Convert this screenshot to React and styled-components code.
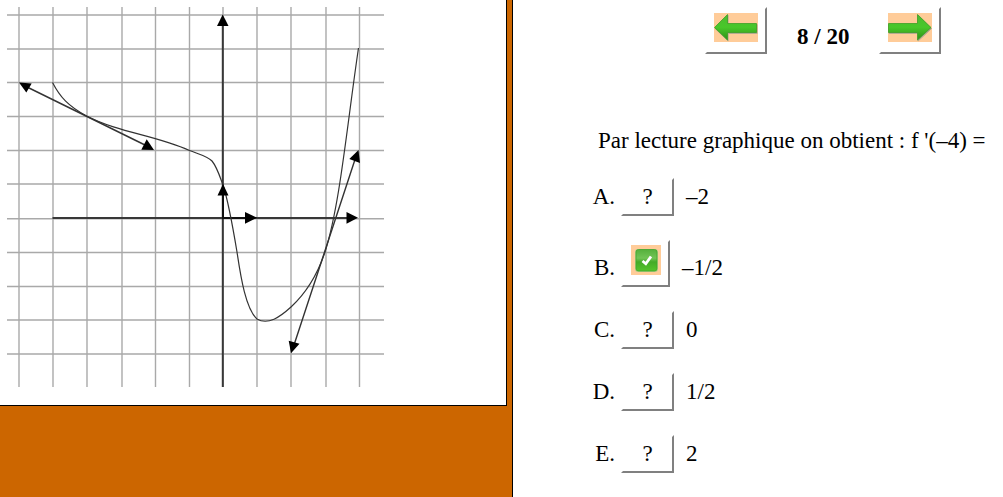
import React from "react";
import styled, { createGlobalStyle } from "styled-components";

const GlobalStyle = createGlobalStyle`
  * { box-sizing: border-box; }
  body {
    margin: 0;
    background: #fff;
    color: #000;
    font-family: "Liberation Serif", "Times New Roman", serif;
    font-size: 23px;
    line-height: 28px;
  }
`;

const Page = styled.div`
  display: grid;
  grid-template-columns: 513fr 490fr;
  min-height: 100vh;
`;

const FigureSide = styled.section`
  background: #cc6600;
  border-right: 1px solid #000;
  padding-right: 5px;
`;

const FigureCard = styled.figure`
  margin: 0;
  padding: 7px 7px 18px;
  background: #fff;
  border-right: 1px solid #000;
  border-bottom: 1px solid #000;

  svg {
    display: block;
    width: 377px;
    max-width: 100%;
    height: auto;
  }
`;

const QuizSide = styled.main`
  display: flex;
  flex-direction: column;
  padding: 7px 0 0 79px;
`;

const Nav = styled.nav`
  display: flex;
  align-items: flex-end;
  gap: 30px;
  padding-left: 113px;
`;

const Counter = styled.strong`
  padding-bottom: 3px;
  white-space: nowrap;
`;

const Button = styled.button`
  border: 2px solid;
  border-color: #fff #808080 #808080 #fff;
  background: #fff;
  color: inherit;
  font: inherit;
  cursor: pointer;
`;

const NavButton = styled(Button)`
  padding: 4px 7px 10px;

  svg { display: block; }
`;

const AnswerButton = styled(Button)`
  min-width: ${({ $checked }) => ($checked ? "0" : "53px")};
  padding: ${({ $checked }) => ($checked ? "3px 7px 3px 8px" : "3px 8px")};

  svg { vertical-align: baseline; }
`;

const Question = styled.p`
  margin: 73px 0 23px;
  padding-left: 6px;
`;

const Answers = styled.ul`
  display: flex;
  flex-direction: column;
  gap: 24px;
  margin: 0;
  padding: 0 0 24px;
  list-style: none;
`;

const Answer = styled.li`
  display: flex;
  align-items: baseline;
`;

const Letter = styled.span`
  width: 23px;
  margin-right: 6px;
  text-align: right;
`;

const Value = styled.span`
  margin-left: 12px;
`;

const columns = [19, 53, 87, 122, 155.5, 189.5, 223, 257, 291, 326, 359.5];
const lines = [15, 49, 82.5, 116.5, 150.5, 184, 218.7, 252.5, 286.5, 320, 354];

function Graph() {
  return (
    <svg viewBox="7 7 377 380" width="377" height="380" role="img" aria-label="Courbe de f et deux tangentes">
      <g stroke="#a9a9a9" strokeWidth="1.4">
        {columns.map((x) => <path key={x} d={`M${x} 7V387`} />)}
        {lines.map((y) => <path key={y} d={`M7 ${y}H384`} />)}
      </g>
      <g stroke="#383838" strokeWidth="2" fill="none">
        <path d="M222.8 22V387M52.5 218H350" />
        <path d="M223 192V218H250" stroke="#111" />
      </g>
      <g stroke="#333" strokeWidth="1.4" fill="none">
        <path d="M25 86L148 146.500M294 345L355.500 158" />
        <path
          strokeWidth="1.2"
          d="M52.500 82.500C60 97 68 106 86.500 116C120 133 155 135 189.500 150.500C200 154.500 207 156 212 161C217 167 220 177 223 185C228 200 234 234 237 252C241 279 246 309 257 319C268 325.500 280 317 291 307C304 295 316 279 325 252C340 205 347 125 358.500 48"
        />
      </g>
      <g fill="#000">
        <path d="M222.700 14.500L228.500 26H217Z" />
        <path d="M223 184L228.500 195.500H217.500Z" />
        <path d="M257 217.800L245 223.700V212Z" />
        <path d="M358 217.800L346.500 223.700V212Z" />
        <path d="M19 82.500L31.700 83.500L26.300 92.500Z" />
        <path d="M154 150L146.700 139.300L141.300 149.700Z" />
        <path d="M358.500 150L360 163L349.300 159Z" />
        <path d="M291 353.300L288.700 340.700L299.500 343.700Z" />
      </g>
    </svg>
  );
}

function ArrowIcon({ next }) {
  const id = next ? "greenNext" : "greenPrevious";
  const arrow = next
    ? "M.5 10.500H29.500V1.500L43 14.500L29.500 27V19.500H.5Z"
    : "M42.500 10.500H13.500V1.500L.5 14.500L13.500 27V19.500H42.500Z";
  return (
    <svg width="44" height="29" viewBox="0 0 44 29" aria-hidden="true">
      <defs>
        <linearGradient id={id} x1="0" y1="0" x2="0" y2="1">
          <stop offset="0" stopColor="#4bbb30" />
          <stop offset="0.5" stopColor="#49c72a" />
          <stop offset="1" stopColor="#2d9018" />
        </linearGradient>
      </defs>
      <path d="M0 0H44V29H0Z" fill="#ffcc99" />
      <path d={arrow} fill="#a9a28e" stroke="#b5aa91" transform="translate(.6 1)" />
      <path d={arrow} fill={`url(#${id})`} stroke="#3d9f26" strokeWidth="0.8" />
    </svg>
  );
}

function CheckIcon() {
  return (
    <svg width="30" height="30" viewBox="0 0 30 30" aria-hidden="true">
      <defs>
        <linearGradient id="greenTile" x1="0" y1="0" x2="0" y2="1">
          <stop offset="0" stopColor="#55b03c" />
          <stop offset="0.4" stopColor="#72c456" />
          <stop offset="0.58" stopColor="#44ab28" />
          <stop offset="1" stopColor="#55c42c" />
        </linearGradient>
      </defs>
      <path d="M0 0H30V30H0Z" fill="#ffcc99" />
      <rect x="4" y="4" width="23" height="23" rx="3" fill="#b8cd8c" />
      <rect x="5" y="4.500" width="21" height="21.500" rx="2.500" fill="url(#greenTile)" stroke="#43a52c" strokeWidth="0.8" />
      <path d="M11.500 16L14.800 18.800L20 11.500" fill="none" stroke="#fff" strokeWidth="2.800" />
    </svg>
  );
}

const answers = [
  { letter: "A", value: "–2" },
  { letter: "B", value: "–1/2", checked: true },
  { letter: "C", value: "0" },
  { letter: "D", value: "1/2" },
  { letter: "E", value: "2" },
];

export default function App() {
  return (
    <>
      <GlobalStyle />
      <Page>
        <FigureSide>
          <FigureCard>
            <Graph />
          </FigureCard>
        </FigureSide>
        <QuizSide>
          <Nav>
            <NavButton type="button" aria-label="Question précédente">
              <ArrowIcon />
            </NavButton>
            <Counter>8 / 20</Counter>
            <NavButton type="button" aria-label="Question suivante">
              <ArrowIcon next />
            </NavButton>
          </Nav>
          <Question>Par lecture graphique on obtient : f '(–4) =</Question>
          <Answers>
            {answers.map(({ letter, value, checked }) => (
              <Answer key={letter}>
                <Letter>{letter}.</Letter>
                <AnswerButton
                  type="button"
                  $checked={checked}
                  aria-label={`Réponse ${letter}`}
                  aria-pressed={Boolean(checked)}
                >
                  {checked ? <CheckIcon /> : "?"}
                </AnswerButton>
                <Value>{value}</Value>
              </Answer>
            ))}
          </Answers>
        </QuizSide>
      </Page>
    </>
  );
}
